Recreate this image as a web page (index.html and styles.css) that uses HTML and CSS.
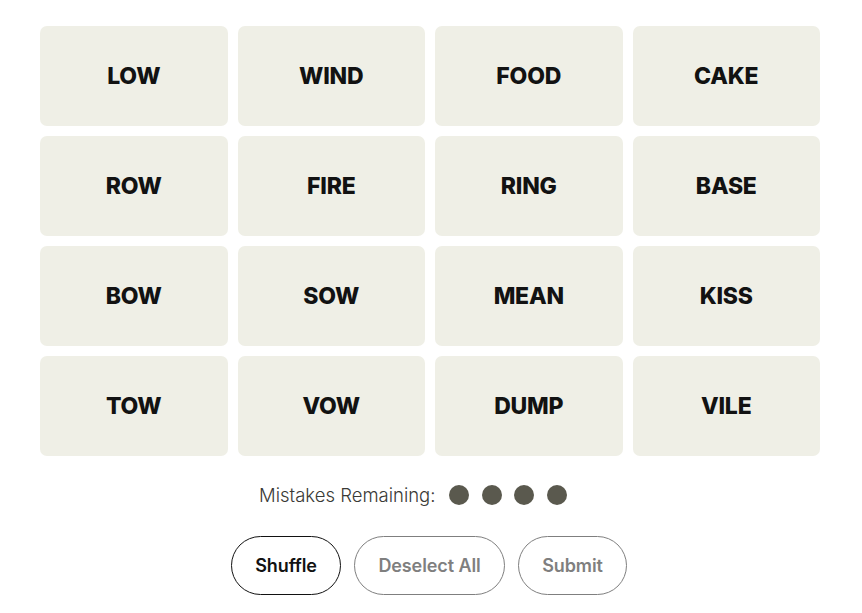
FILE: index.html
```html
<!DOCTYPE html>
<html lang="en">
<head>
<meta charset="utf-8">
<title>Connections</title>
<link rel="stylesheet" href="styles.css">
</head>
<body>
<main class="game">
  <section class="board">
    <button class="tile">LOW</button>
    <button class="tile">WIND</button>
    <button class="tile">FOOD</button>
    <button class="tile">CAKE</button>
    <button class="tile">ROW</button>
    <button class="tile">FIRE</button>
    <button class="tile">RING</button>
    <button class="tile">BASE</button>
    <button class="tile">BOW</button>
    <button class="tile">SOW</button>
    <button class="tile">MEAN</button>
    <button class="tile">KISS</button>
    <button class="tile">TOW</button>
    <button class="tile">VOW</button>
    <button class="tile">DUMP</button>
    <button class="tile">VILE</button>
  </section>
  <div class="mistakes">
    <span class="mistakes-label">Mistakes Remaining:</span>
    <span class="dots">
      <span class="dot"></span><span class="dot"></span><span class="dot"></span><span class="dot"></span>
    </span>
  </div>
  <div class="controls">
    <button class="pill pill-active">Shuffle</button>
    <button class="pill pill-disabled">Deselect All</button>
    <button class="pill pill-disabled">Submit</button>
  </div>
</main>
</body>
</html>
```

FILE: styles.css
```css
* { box-sizing: border-box; }
html, body { margin: 0; padding: 0; background: #ffffff; }
body { font-family: Inter, "Liberation Sans", sans-serif; color: #121212; }

.game {
  padding: 26px 42px 0 40px;
  display: flex;
  flex-direction: column;
  align-items: center;
}

.board {
  width: 780px;
  display: grid;
  grid-template-columns: repeat(4, 1fr);
  grid-auto-rows: 100px;
  gap: 10px;
}

.tile {
  border: none;
  border-radius: 7px;
  background: #efefe6;
  color: #121212;
  font-family: Inter, "Liberation Sans", sans-serif;
  font-weight: 800;
  font-size: 23px;
  letter-spacing: -0.2px;
  padding: 0;
}

.mistakes {
  margin-top: 29px;
  height: 20px;
  display: flex;
  align-items: center;
  gap: 14px;
  padding-right: 34px;
}

.mistakes-label {
  font-size: 18.5px;
  font-weight: 300;
  color: #3a3a36;
}

.dots { display: flex; gap: 12.5px; }

.dot {
  width: 20px;
  height: 20px;
  border-radius: 50%;
  background: #5a594e;
}

.controls {
  margin-top: 31px;
  margin-left: -2px;
  display: flex;
  gap: 13.5px;
}

.pill {
  height: 59px;
  padding: 0 23px;
  border-radius: 30px;
  background: #ffffff;
  font-family: Inter, "Liberation Sans", sans-serif;
  font-size: 18px;
  font-weight: 600;
  letter-spacing: -0.1px;
}

.pill-active { border: 1px solid #121212; color: #121212; }
.pill-disabled { border: 1px solid #7f7f7f; color: #7f7f7f; }
```
